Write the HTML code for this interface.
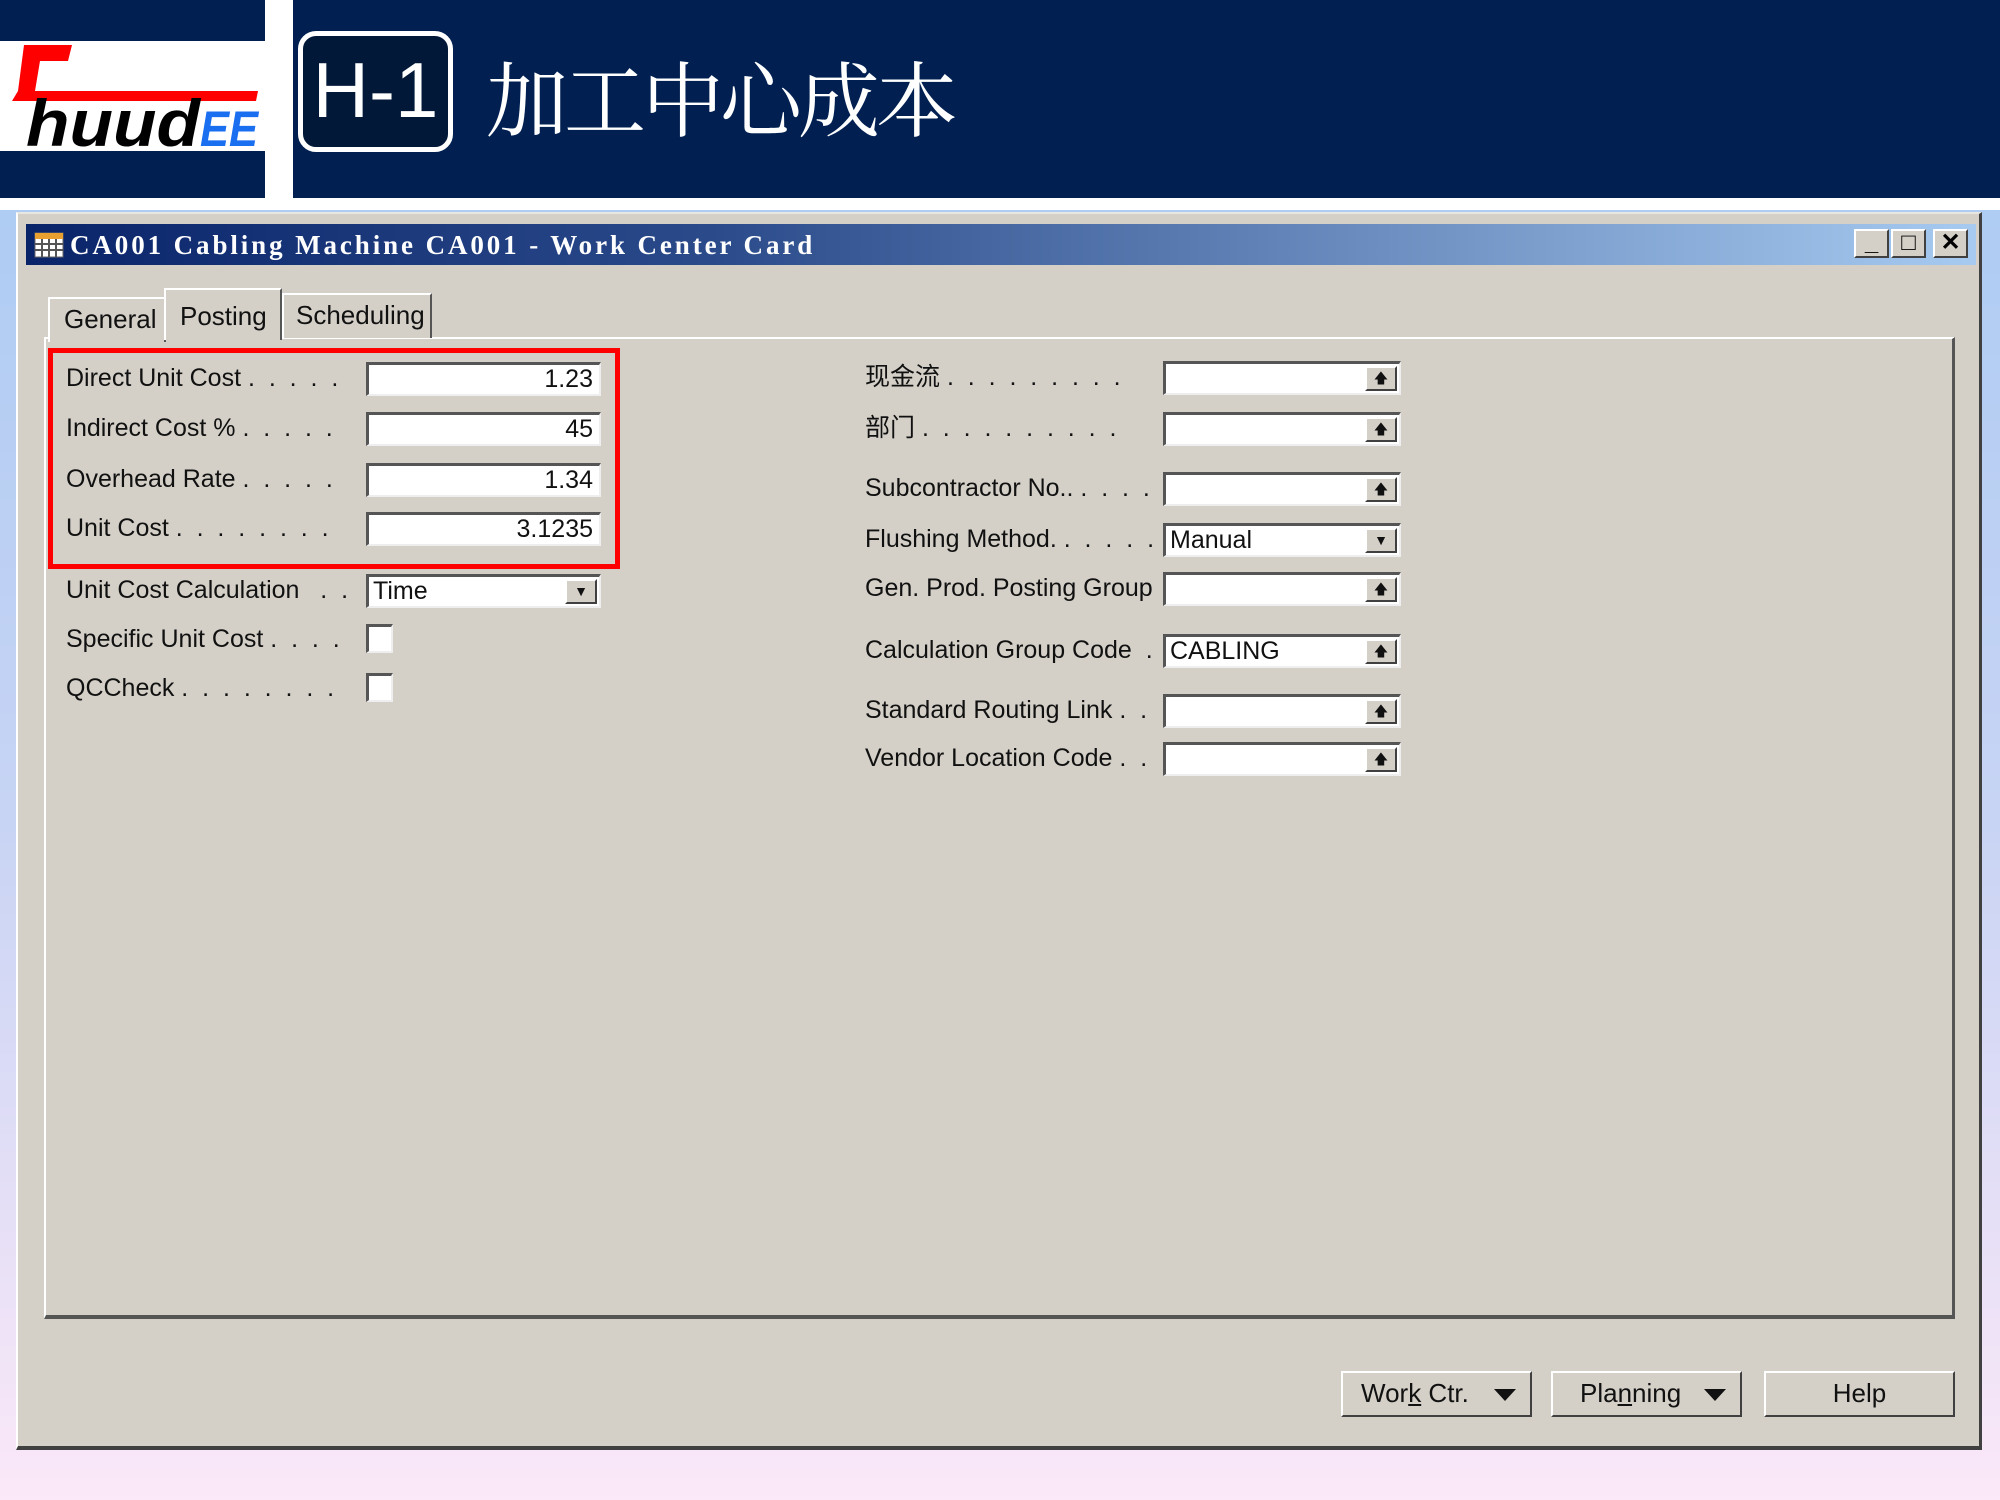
<!DOCTYPE html>
<html><head><meta charset="utf-8"><style>
*{margin:0;padding:0;box-sizing:border-box}
body{width:2000px;height:1500px;position:relative;overflow:hidden;background:linear-gradient(180deg,#a6c9f2 0%,#c8d4f4 55%,#fbe8f8 100%);font-family:"Liberation Sans","Noto Sans CJK SC",sans-serif}
.a{position:absolute}
.hdr{left:0;top:0;width:2000px;height:200px;background:#012051}
.win{left:16px;top:212px;width:1966px;height:1238px;background:#d4d0c8;border-top:2px solid #e8e6e0;border-left:2px solid #fff;border-right:3px solid #404040;border-bottom:4px solid #404040}
.tb{left:26px;top:224px;width:1950px;height:41px;background:linear-gradient(90deg,#0a246a 0%,#2a4a8a 35%,#a6caf0 100%)}
.tt{left:70px;top:226px;color:#fff;font-family:"Liberation Serif",serif;font-weight:bold;font-size:27px;letter-spacing:2.9px;line-height:38px}
.wb{top:229px;width:35px;height:29px;background:#d4d0c8;border:2px solid;border-color:#fff #404040 #404040 #fff;font-size:24px;font-weight:bold;text-align:center;line-height:24px}
.panel{left:44px;top:337px;width:1911px;height:982px;border-top:2px solid #fff;border-left:2px solid #fff;border-right:3px solid #555;border-bottom:4px solid #555}
.tab{top:293px;height:45px;border:2px solid #fff;border-right:2px solid #555;border-bottom:none;font-size:26px;line-height:40px;padding-left:14px;color:#111;background:#d4d0c8}
.lb{font-size:25px;color:#111;line-height:33px;white-space:pre}
.in{height:34px;background:#fff;border-top:3px solid #555;border-left:3px solid #555;border-bottom:2px solid #eee;border-right:2px solid #eee;font-size:25px;line-height:29px;color:#111;padding:0 4px}
.r{text-align:right;padding-right:6px}
.bt{position:absolute;right:2px;top:2px;width:32px;height:25px;background:#d4d0c8;border:2px solid;border-color:#fff #404040 #404040 #fff;font-size:14px;text-align:center;line-height:20px}
.cb{width:27px;height:29px;background:#fff;border-top:3px solid #555;border-left:3px solid #555;border-bottom:2px solid #eee;border-right:2px solid #eee}
.btn{top:1371px;height:46px;background:#d4d0c8;border:2px solid;border-color:#fff #404040 #404040 #fff;font-size:26px;line-height:40px;color:#111}
.ar{position:absolute;right:14px;top:16px;width:0;height:0;border-left:11px solid transparent;border-right:11px solid transparent;border-top:12px solid #111}
</style></head><body>
<div class="a hdr"></div>
<div class="a" style="left:0;top:41px;width:265px;height:110px;background:#fff"></div>
<svg class="a" style="left:0;top:41px" width="265" height="110">
<path d="M24 4 L72 4 L68 20 L40 20 L35 50 L258 50 L256 60 L12 60 L18 50 Z" fill="#f00"/>
<text x="26" y="105" font-family="Liberation Sans" font-weight="bold" font-style="italic" font-size="66" fill="#000" textLength="174" lengthAdjust="spacingAndGlyphs">huud</text>
<text x="200" y="105" font-family="Liberation Sans" font-weight="bold" font-style="italic" font-size="50" fill="#1a6ef0" textLength="58" lengthAdjust="spacingAndGlyphs">EE</text>
</svg>
<div class="a" style="left:265px;top:0;width:28px;height:200px;background:#fff"></div>
<div class="a" style="left:0;top:198px;width:2000px;height:12px;background:#fff"></div>
<div class="a" style="left:298px;top:31px;width:155px;height:121px;border:5px solid #fff;border-radius:18px;background:#011838;color:#fff;font-size:78px;text-align:center;line-height:108px">H-1</div>
<div class="a" style="left:486px;top:46px;color:#fff;font-size:82px;line-height:100px;font-family:'Noto Serif CJK SC','Noto Sans CJK SC',serif;letter-spacing:-4px">加工中心成本</div>

<div class="a win"></div>
<div class="a tb"></div>
<svg class="a" style="left:34px;top:232px" width="30" height="26"><rect x="1" y="1" width="28" height="24" fill="#fff" stroke="#666"/><rect x="1" y="1" width="28" height="6" fill="#e8a030"/><path d="M1 12H29M1 18H29M8 7V25M15 7V25M22 7V25" stroke="#555" stroke-width="2"/></svg>
<div class="a tt">CA001 Cabling Machine CA001 - Work Center Card</div>
<div class="a wb" style="left:1854px">_</div>
<div class="a wb" style="left:1891px">□</div>
<div class="a wb" style="left:1933px">✕</div>

<div class="a panel"></div>
<div class="a tab" style="left:48px;width:118px;top:297px">General</div>
<div class="a tab" style="left:164px;width:118px;top:288px;height:52px;border-right:2px solid #555;padding-top:6px">Posting</div>
<div class="a tab" style="left:282px;width:150px;padding-left:12px">Scheduling</div>

<div class="a" style="left:48px;top:348px;width:572px;height:221px;border:5px solid #f00"></div>
<div class="a lb" style="left:66px;top:362px">Direct Unit Cost .  .  .  .  .</div>
<div class="a lb" style="left:66px;top:412px">Indirect Cost % .  .  .  .  .</div>
<div class="a lb" style="left:66px;top:463px">Overhead Rate .  .  .  .  .</div>
<div class="a lb" style="left:66px;top:512px">Unit Cost .  .  .  .  .  .  .  .</div>
<div class="a lb" style="left:66px;top:574px">Unit Cost Calculation   .  .</div>
<div class="a lb" style="left:66px;top:623px">Specific Unit Cost .  .  .  .</div>
<div class="a lb" style="left:66px;top:672px">QCCheck .  .  .  .  .  .  .  .</div>
<div class="a in r" style="left:366px;top:362px;width:235px">1.23</div>
<div class="a in r" style="left:366px;top:412px;width:235px">45</div>
<div class="a in r" style="left:366px;top:463px;width:235px">1.34</div>
<div class="a in r" style="left:366px;top:512px;width:235px">3.1235</div>
<div class="a in" style="left:366px;top:574px;width:235px">Time<div class="bt">▼</div></div>
<div class="a cb" style="left:366px;top:624px"></div>
<div class="a cb" style="left:366px;top:673px"></div>

<div class="a lb" style="left:865px;top:361px">现金流 .  .  .  .  .  .  .  .  .</div>
<div class="a lb" style="left:865px;top:412px">部门 .  .  .  .  .  .  .  .  .  .</div>
<div class="a lb" style="left:865px;top:472px">Subcontractor No.. .  .  .  .</div>
<div class="a lb" style="left:865px;top:523px">Flushing Method. .  .  .  .  .</div>
<div class="a lb" style="left:865px;top:572px">Gen. Prod. Posting Group</div>
<div class="a lb" style="left:865px;top:634px">Calculation Group Code  .</div>
<div class="a lb" style="left:865px;top:694px">Standard Routing Link .  .</div>
<div class="a lb" style="left:865px;top:742px">Vendor Location Code .  .</div>
<div class="a in" style="left:1163px;top:361px;width:238px"><div class="bt">🡅</div></div>
<div class="a in" style="left:1163px;top:412px;width:238px"><div class="bt">🡅</div></div>
<div class="a in" style="left:1163px;top:472px;width:238px"><div class="bt">🡅</div></div>
<div class="a in" style="left:1163px;top:523px;width:238px">Manual<div class="bt">▼</div></div>
<div class="a in" style="left:1163px;top:572px;width:238px"><div class="bt">🡅</div></div>
<div class="a in" style="left:1163px;top:634px;width:238px">CABLING<div class="bt">🡅</div></div>
<div class="a in" style="left:1163px;top:694px;width:238px"><div class="bt">🡅</div></div>
<div class="a in" style="left:1163px;top:742px;width:238px"><div class="bt">🡅</div></div>

<div class="a btn" style="left:1341px;width:191px;padding-left:18px">Wor<u>k</u> Ctr.<span class="ar"></span></div>
<div class="a btn" style="left:1551px;width:191px;padding-left:27px">Pla<u>n</u>ning<span class="ar"></span></div>
<div class="a btn" style="left:1764px;width:191px;text-align:center">Help</div>
</body></html>
